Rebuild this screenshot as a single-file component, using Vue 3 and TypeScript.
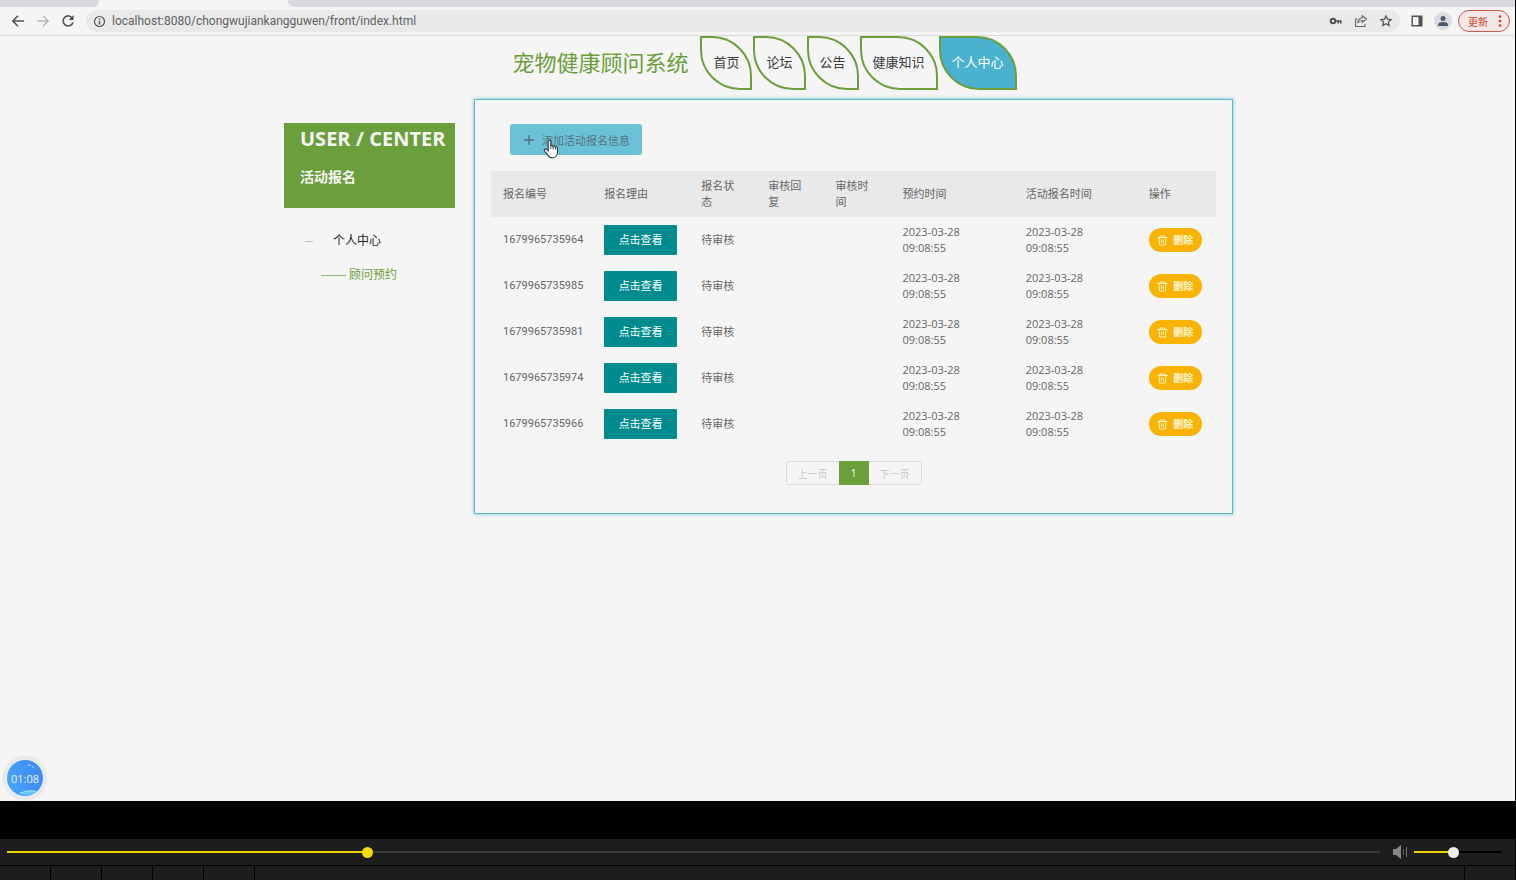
<script setup lang="ts">
import { computed, ref } from 'vue'

interface Signup {
  id: string
  status: string
  reply: string
  reviewedAt: string
  bookedAt: [string, string]
  signupAt: [string, string]
}

const navItems = ['首页', '论坛', '公告', '健康知识', '个人中心']
const activeNav = ref('个人中心')

const headers = ['报名编号', '报名理由', '报名状态', '审核回复', '审核时间', '预约时间', '活动报名时间', '操作']

const ids = ['1679965735964', '1679965735985', '1679965735981', '1679965735974', '1679965735966']
const rows = ref<Signup[]>(
  ids.map((id) => ({
    id,
    status: '待审核',
    reply: '',
    reviewedAt: '',
    bookedAt: ['2023-03-28', '09:08:55'],
    signupAt: ['2023-03-28', '09:08:55'],
  })),
)

const address = 'localhost:8080/chongwujiankangguwen/front/index.html'
const position = ref(261)
const volume = ref(44)
const positionFill = computed(() => ({ '--fill': `${position.value / 10}%` }))
const volumeFill = computed(() => ({ '--fill': `${volume.value}%` }))

function removeRow(id: string) {
  rows.value = rows.value.filter((row) => row.id !== id)
}
</script>

<template>
  <div class="screen">
    <header class="browser">
      <div class="tabs">
        <span class="tab tab-first"></span>
        <span class="tab-active"></span>
        <span class="tab tab-rest"></span>
      </div>
      <div class="toolbar">
        <button class="icon-btn" type="button" aria-label="后退">
          <svg width="14" height="14" viewBox="0 0 14 14" fill="none" stroke="#505356" stroke-width="1.6"><path d="M13 7H2M7 1.8 1.8 7 7 12.2" /></svg>
        </button>
        <button class="icon-btn" type="button" aria-label="前进">
          <svg width="14" height="14" viewBox="0 0 14 14" fill="none" stroke="#b5b7b9" stroke-width="1.5"><path d="M1 7h11M7 1.8 12.2 7 7 12.2" /></svg>
        </button>
        <button class="icon-btn" type="button" aria-label="刷新">
          <svg width="14" height="14" viewBox="0 0 14 14" fill="none" stroke="#505356" stroke-width="1.6"><path d="M11.5 4.4A5 5 0 1 0 12 8.2" /><path d="M12.6 1v5H7.6z" fill="#505356" stroke="none" /></svg>
        </button>
        <div class="omnibox">
          <svg width="13" height="13" viewBox="0 0 13 13" fill="none" stroke="#56595c" stroke-width="1.2"><circle cx="6.5" cy="6.5" r="5" /><path d="M6.5 5.8v3.6M6.5 3.4v1.4" stroke-width="1.4" /></svg>
          <div class="address">
            <input :value="address" class="address-input" type="text" aria-label="地址" />
          </div>
          <button class="icon-btn" type="button" aria-label="密码">
            <svg width="14" height="14" viewBox="0 0 14 14" fill="none" stroke="#505356"><circle cx="4" cy="7" r="2.3" stroke-width="2" /><path d="M6.3 7h6.2M9.2 7v2.6M11.8 7v2.6" stroke-width="1.7" /></svg>
          </button>
          <button class="icon-btn" type="button" aria-label="分享">
            <svg width="14" height="14" viewBox="0 0 14 14" fill="none" stroke="#66696c" stroke-width="1.1"><path d="M3.5 5H1.5v7.5h9.5V10" /><path d="M8.3 1.8 12.5 5 8.3 8.3V6.5C6 6.5 4.6 7.3 3.6 9 4 6 5.700 4 8.300 3.700z" /></svg>
          </button>
          <button class="icon-btn" type="button" aria-label="收藏">
            <svg width="14" height="14" viewBox="0 0 14 14" fill="none" stroke="#505356" stroke-width="1.2"><path d="m7 1.900 1.500 3.300 3.600.4-2.700 2.400.8 3.600L7 9.800l-3.200 1.800.8-3.600-2.700-2.400 3.600-.4z" /></svg>
          </button>
        </div>
        <button class="icon-btn" type="button" aria-label="侧边栏">
          <svg width="12" height="12" viewBox="0 0 12 12"><path d="M1.200 1.200h9.600v9.600H1.200z" fill="none" stroke="#505356" stroke-width="1.400" /><path d="M7.500 1h3.500v10H7.500z" fill="#505356" /></svg>
        </button>
        <button class="avatar" type="button" aria-label="用户">
          <svg width="12" height="12" viewBox="0 0 12 12" fill="#4d5a6d"><circle cx="6" cy="3.500" r="2.500" /><path d="M1 11V9.500C1 7.800 4 7 6 7s5 .8 5 2.500V11z" /></svg>
        </button>
        <button class="update" type="button">
          更新
          <svg width="4" height="12" viewBox="0 0 4 12" fill="#c5432f"><circle cx="2" cy="1.500" r="1.300" /><circle cx="2" cy="6" r="1.300" /><circle cx="2" cy="10.500" r="1.300" /></svg>
        </button>
      </div>
    </header>

    <main class="page">
      <div class="site-head">
        <h1 class="site-title">宠物健康顾问系统</h1>
        <nav class="nav">
          <a
            v-for="item in navItems"
            :key="item"
            href="#"
            class="nav-link"
            :class="{ active: item === activeNav }"
            @click.prevent="activeNav = item"
          >{{ item }}</a>
        </nav>
      </div>

      <div class="content">
        <aside class="sidebar">
          <div class="side-head">
            <h2 class="side-title">USER / CENTER</h2>
            <h3 class="side-sub">活动报名</h3>
          </div>
          <a class="side-link" href="#">个人中心</a>
          <a class="side-child" href="#">顾问预约</a>
        </aside>

        <section class="card">
          <div class="actions">
            <button class="add" type="button">
              <svg width="12" height="12" viewBox="0 0 12 12" stroke="#53717c" stroke-width="1.400"><path d="M6 1v10M1 6h10" /></svg>
              添加活动报名信息
            </button>
            <svg class="pointer" width="16" height="20" viewBox="0 0 16 20"><path d="M5.200 12V2.600C5.200.7 7.800.7 7.800 2.600V7c.3-1 2.300-.8 2.400.5.500-.9 2.200-.6 2.300.7.700-.7 2-.2 2 1V13c0 3-1.800 5.800-4.800 5.800-2.700 0-4-1.100-5-2.900L1.600 12c-1-1.600.8-2.700 2-1.600z" fill="#fff" stroke="#30363a" stroke-width="1.100" /><path d="M7.800 7v3.200M10.200 7.600v2.800M12.500 8.300v2.400" stroke="#30363a" stroke-width=".9" /></svg>
          </div>

          <table class="table">
            <colgroup>
              <col class="c-id" /><col class="c-reason" /><col class="c-small" /><col class="c-small" /><col class="c-small" /><col class="c-date" /><col class="c-date" /><col class="c-op" />
            </colgroup>
            <thead>
              <tr><th v-for="head in headers" :key="head" scope="col">{{ head }}</th></tr>
            </thead>
            <tbody>
              <tr v-for="row in rows" :key="row.id">
                <td class="number">{{ row.id }}</td>
                <td><button class="view" type="button">点击查看</button></td>
                <td>{{ row.status }}</td>
                <td>{{ row.reply }}</td>
                <td>{{ row.reviewedAt }}</td>
                <td>{{ row.bookedAt[0] }}<br />{{ row.bookedAt[1] }}</td>
                <td>{{ row.signupAt[0] }}<br />{{ row.signupAt[1] }}</td>
                <td>
                  <button class="delete" type="button" @click="removeRow(row.id)">
                    <svg width="11" height="11" viewBox="0 0 11 11" fill="none" stroke="#fff3cc" stroke-width="1"><path d="M.5 2.500h10M3 2V1h5v1M2 2.500l.5 7.500h6L9 2.500M4.500 4.500V8M6.500 4.500V8" /></svg>
                    删除
                  </button>
                </td>
              </tr>
            </tbody>
          </table>

          <div class="pager">
            <button class="page-btn prev" type="button" disabled>上一页</button>
            <button class="page-btn current" type="button">1</button>
            <button class="page-btn next" type="button" disabled>下一页</button>
          </div>
        </section>
      </div>

      <div class="timer">
        <svg class="timer-wave" width="36" height="36" viewBox="0 0 36 36" fill="none"><path d="M21 5q4 0 7 4" stroke="#b9e2ff" stroke-dasharray="3 1" /><path d="M12 34q6-5 18-3-6 6-18 3z" fill="#62c7fb" /><path d="M13 33q7-3 16-2" stroke="#a4e3ff" /></svg>
        <span class="timer-text">01:08</span>
      </div>
    </main>

    <footer class="player">
      <div class="letterbox"></div>
      <div class="controls">
        <input v-model.number="position" class="range seek" type="range" min="0" max="1000" aria-label="播放进度" :style="positionFill" />
        <button class="icon-btn" type="button" aria-label="静音">
          <svg width="16" height="14" viewBox="0 0 16 14"><path d="M1 4h3l5-4v14l-5-4H1z" fill="#858585" /><path d="M11.500 4v6" stroke="#606060" /><path d="M14.500 2v10" stroke="#777" /></svg>
        </button>
        <input v-model.number="volume" class="range volume" type="range" min="0" max="100" aria-label="音量" :style="volumeFill" />
      </div>
      <div class="slots">
        <span v-for="n in 5" :key="n" class="slot"></span>
        <span class="slot slot-wide"></span>
        <span class="slot"></span>
      </div>
    </footer>
  </div>
</template>

<style>
html,
body {
  margin: 0;
  background: #000;
}
</style>

<style scoped>
.screen {
  box-sizing: border-box;
  display: flex;
  flex-direction: column;
  min-height: 100vh;
  border-right: 1px solid #000;
  background: #f5f5f5;
  color: #666;
  font-family: "Open Sans", "Noto Sans CJK SC", sans-serif;
  font-size: 11px;
}
button,
input {
  margin: 0;
  padding: 0;
  border: 0;
  background: none;
  color: inherit;
  font: inherit;
}
button {
  cursor: pointer;
}
a {
  color: inherit;
  text-decoration: none;
}
svg {
  display: block;
  flex: none;
}

/* browser bar */
.browser {
  border-bottom: 1px solid #dadada;
}
.tabs {
  display: flex;
  height: 7px;
  background: #f5f5f5;
}
.tab {
  background: #d8d9dd;
}
.tab-first {
  width: 99px;
  border-bottom-right-radius: 6px;
}
.tab-active {
  width: 189px;
}
.tab-rest {
  flex: 1;
  border-bottom-left-radius: 6px;
}
.toolbar {
  display: flex;
  align-items: center;
  height: 28px;
  padding: 0 5px 0 11px;
  gap: 11px;
}
.icon-btn {
  display: flex;
  align-items: center;
  justify-content: center;
}
.omnibox {
  display: flex;
  flex: 1;
  align-items: center;
  gap: 11px;
  height: 22px;
  padding: 0 7px 0 7px;
  border-radius: 11px;
  background: #e9e9e9;
}
.address {
  display: flex;
  flex: 1;
  margin-left: -5px;
}
.address-input {
  width: 100%;
  color: #5f6265;
  font-family: Roboto, sans-serif;
  font-size: 12px;
  line-height: 20px;
}
.avatar {
  display: flex;
  align-items: center;
  justify-content: center;
  width: 18px;
  height: 18px;
  border-radius: 50%;
  background: #d9dce1;
}
.update {
  display: flex;
  align-items: center;
  gap: 10px;
  height: 22px;
  margin-left: -5px;
  padding: 0 7px 0 9px;
  border: 1px solid #c85b4a;
  border-radius: 11px;
  background: #f4e7e5;
  color: #c5432f;
  font-size: 10px;
}

/* page */
.page {
  position: relative;
  flex: 1;
  padding-left: 2px;
}
.site-head {
  display: flex;
  align-items: center;
  justify-content: center;
  gap: 12px;
  padding-left: 12px;
}
.site-title {
  margin: 0 0 2px;
  color: #6a9f3b;
  font-size: 22px;
  font-weight: 400;
  line-height: 32px;
}
.nav {
  display: flex;
  gap: 1px;
}
.nav-link {
  box-sizing: border-box;
  height: 54px;
  padding: 0 11px;
  border: 2px solid #6a9f3b;
  border-radius: 0 40px 0 40px;
  color: #3c3c3c;
  font-size: 13px;
  line-height: 48px;
}
.nav-link.active {
  background: #4ab2cf;
  color: #fff;
}
.content {
  display: grid;
  grid-template-columns: 171px 1fr;
  align-items: start;
  gap: 19px;
  max-width: 949px;
  margin: 9px auto 0;
}
.sidebar {
  display: flex;
  flex-direction: column;
  padding-top: 24px;
}
.side-head {
  box-sizing: border-box;
  min-height: 85px;
  padding: 0 0 0 16px;
  background: #6a9f3b;
  color: #f5f5f5;
  white-space: nowrap;
}
.side-title {
  margin: 0;
  font-size: 20px;
  font-weight: 700;
  line-height: 32px;
}
.side-sub {
  margin: 10px 0 0;
  font-size: 14px;
  font-weight: 700;
  line-height: 24px;
}
.side-link,
.side-child {
  display: flex;
  align-items: center;
  font-size: 12px;
  line-height: 34px;
}
.side-link {
  gap: 20px;
  margin-top: 16px;
  padding-left: 21px;
  color: #222;
}
.side-link::before {
  width: 8px;
  height: 1px;
  background: #bbb;
  content: "";
}
.side-child {
  gap: 3px;
  padding-left: 37px;
  color: #6a9f3b;
}
.side-child::before {
  width: 25px;
  height: 1px;
  background: #8fba6a;
  content: "";
}
.card {
  padding: 24px 16px 28px;
  border: 1px solid #5db6cd;
  box-shadow: 0 0 4px #6fc5d8;
}
.actions {
  position: relative;
  display: flex;
  margin: 0 0 16px 19px;
}
.add {
  display: flex;
  align-items: center;
  gap: 7px;
  height: 31px;
  padding: 0 12px 0 13px;
  border-radius: 3px;
  background: #6bc1d8;
  color: #56717b;
}
.pointer {
  position: absolute;
  top: 15px;
  left: 33px;
  pointer-events: none;
}
.table {
  width: 100%;
  border-collapse: collapse;
  table-layout: fixed;
  line-height: 16px;
  text-align: left;
}
.c-id {
  width: 101px;
}
.c-reason {
  width: 97px;
}
.c-small {
  width: 67px;
}
.c-date {
  width: 123px;
}
.c-op {
  width: 79px;
}
.table th {
  height: 46px;
  padding: 0 22px 0 12px;
  background: #e9e9e9;
  font-weight: 400;
}
.table th:nth-child(n + 6) {
  padding-right: 0;
}
.table td {
  height: 46px;
  padding: 0 0 0 12px;
}
.table .number {
  font-family: Roboto, sans-serif;
}
.view {
  display: block;
  width: 73px;
  height: 30px;
  border-radius: 1px;
  background: #008c8f;
  color: #fff;
}
.delete {
  display: flex;
  align-items: center;
  justify-content: center;
  gap: 5px;
  width: 53px;
  height: 24px;
  border-radius: 12px;
  background: #fbb303;
  color: #fff5d5;
  font-size: 10px;
  font-weight: 700;
}
.pager {
  display: flex;
  justify-content: center;
  margin-top: 14px;
}
.page-btn {
  box-sizing: border-box;
  width: 53px;
  height: 24px;
  border: 1px solid #dedede;
  color: #c8c8c8;
  font-size: 10px;
}
.prev {
  border-right: 0;
  border-radius: 2px 0 0 2px;
}
.next {
  border-left: 0;
  border-radius: 0 2px 2px 0;
}
.current {
  width: 30px;
  border-color: #6a9f3b;
  background: #6a9f3b;
  color: #fff;
}
.timer {
  position: absolute;
  bottom: 5px;
  left: 7px;
  display: flex;
  align-items: center;
  justify-content: center;
  width: 36px;
  height: 36px;
  border-radius: 50%;
  background: linear-gradient(70deg, #49a8fa, #3b86f3);
  box-shadow: 0 0 0 2px #e9eff5, 0 0 4px 2px #ccc;
}
.timer-wave {
  position: absolute;
  inset: 0;
}
.timer-text {
  position: relative;
  color: #e4f2ff;
  font-size: 11px;
}

/* player */
.player {
  background: #000;
}
.letterbox {
  height: 38px;
}
.controls {
  display: flex;
  align-items: center;
  height: 26px;
  padding: 0 13px 0 7px;
  background: #1d1d1d;
}
.controls .icon-btn {
  margin: 0 6px 0 12px;
}
.range {
  height: 12px;
  appearance: none;
  background: linear-gradient(to right, #e9d400 var(--fill), var(--rest) var(--fill)) center / 100% var(--thick) no-repeat;
}
.range::-webkit-slider-thumb {
  width: 11px;
  height: 11px;
  border-radius: 50%;
  appearance: none;
  background: var(--thumb);
}
.seek {
  --rest: #3b3b3b;
  --thumb: #f2dc00;
  --thick: 2px;
  flex: 1;
}
.volume {
  --rest: #000;
  --thumb: #eee;
  --thick: 2px;
  width: 88px;
}
.slots {
  display: flex;
  gap: 1px;
  height: 14px;
  margin-top: 1px;
}
.slot {
  width: 50px;
  background: #1d1d1d;
}
.slot-wide {
  flex: 1;
}
</style>
